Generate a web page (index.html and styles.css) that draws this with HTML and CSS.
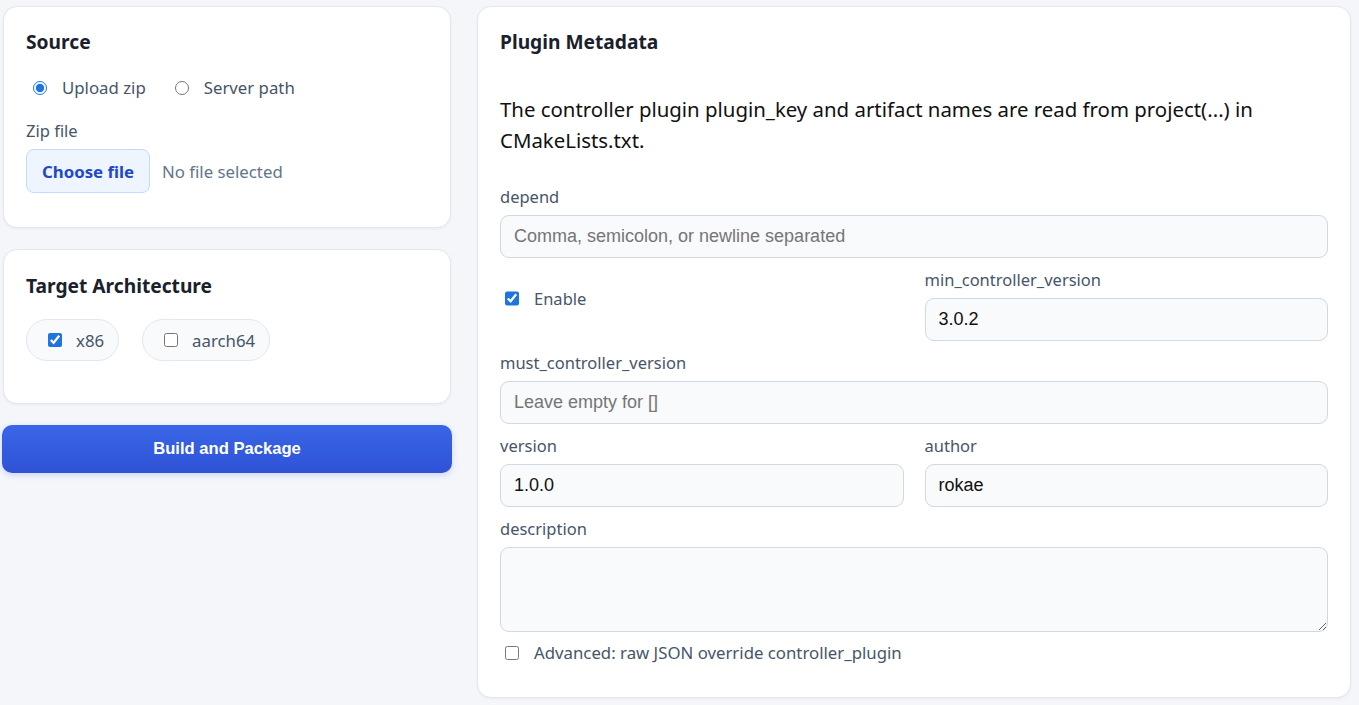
FILE: index.html
```html
<!DOCTYPE html>
<html lang="en">
<head>
    <meta charset="UTF-8">
    <meta name="viewport" content="width=device-width, initial-scale=1.0">
    <title>Plugin Builder</title>
    <link rel="stylesheet" href="styles.css">
</head>
<body>
    <div class="layout">
        <!-- Left column -->
        <div class="side">
            <div class="card source-card">
                <h3>Source</h3>
                <div class="radios">
                    <label class="opt"><input type="radio" name="src" checked> Upload zip</label>
                    <label class="opt"><input type="radio" name="src"> Server path</label>
                </div>
                <div class="field-label">Zip file</div>
                <div class="file-row">
                    <button class="file-btn" type="button">Choose file</button>
                    <span class="file-name">No file selected</span>
                </div>
            </div>

            <div class="card arch-card">
                <h3>Target Architecture</h3>
                <div class="pills">
                    <label class="pill"><input type="checkbox" checked> x86</label>
                    <label class="pill"><input type="checkbox"> aarch64</label>
                </div>
            </div>

            <button class="build-btn" type="button">Build and Package</button>
        </div>

        <!-- Right column -->
        <div class="card meta-card">
            <h3>Plugin Metadata</h3>
            <p class="note">The controller plugin plugin_key and artifact names are read from project(...) in CMakeLists.txt.</p>

            <div class="field">
                <label>depend</label>
                <input type="text" placeholder="Comma, semicolon, or newline separated">
            </div>

            <div class="row">
                <div class="field check-field">
                    <label class="opt"><input type="checkbox" checked> Enable</label>
                </div>
                <div class="field">
                    <label>min_controller_version</label>
                    <input type="text" value="3.0.2">
                </div>
            </div>

            <div class="field">
                <label>must_controller_version</label>
                <input type="text" placeholder="Leave empty for []">
            </div>

            <div class="row">
                <div class="field">
                    <label>version</label>
                    <input type="text" value="1.0.0">
                </div>
                <div class="field">
                    <label>author</label>
                    <input type="text" value="rokae">
                </div>
            </div>

            <div class="field">
                <label>description</label>
                <textarea></textarea>
            </div>

            <label class="opt advanced"><input type="checkbox"> Advanced: raw JSON override controller_plugin</label>
        </div>
    </div>
</body>
</html>
```

FILE: styles.css
```css
body {
    margin: 0;
    background: #f4f6fa;
    font-family: "Noto Sans", "Open Sans", sans-serif;
    color: #1e293b;
}

.layout {
    display: grid;
    grid-template-columns: 450px 1fr;
    gap: 25px;
    padding: 6px 8px 9px 2px;
    align-items: start;
}

.side {
    display: flex;
    flex-direction: column;
    gap: 21px;
}

.card {
    background: #fff;
    border: 1px solid #e3e8ef;
    border-radius: 14px;
    box-shadow: 0 1px 3px rgba(15, 23, 42, 0.05);
    padding: 22px 22px 20px;
    margin: 0 1px;
}

.card h3 {
    margin: 0;
    font-size: 19.2px;
    line-height: 26px;
    font-weight: 700;
    color: #1a202c;
}

.opt {
    display: flex;
    align-items: center;
    gap: 15px;
    font-size: 16.8px;
    color: #475569;
}

.opt input {
    margin: 0;
    width: 14px;
    height: 14px;
    accent-color: #1f74e0;
}

.radios {
    display: flex;
    gap: 29px;
    margin: 22px 0 0 7px;
    line-height: 22px;
}

.field-label {
    margin-top: 21px;
    font-size: 16.5px;
    color: #475569;
    line-height: 22px;
}

.file-row {
    display: flex;
    align-items: center;
    gap: 12px;
    margin-top: 7px;
}

.file-btn {
    font-family: "Noto Sans", sans-serif;
    font-size: 16.8px;
    font-weight: 700;
    color: #2048c8;
    background: #eef5ff;
    border: 1px solid #bfdbfe;
    border-radius: 8px;
    padding: 0 15px;
    height: 44px;
}

.file-name {
    font-size: 16.8px;
    color: #64748b;
}

.source-card {
    padding-bottom: 34px;
}

.arch-card {
    padding-top: 23px;
    padding-bottom: 42px;
}

.pills {
    display: flex;
    gap: 23px;
    margin-top: 20px;
}

.pill {
    display: flex;
    align-items: center;
    gap: 14px;
    height: 40px;
    padding: 0 14px 0 21px;
    border: 1px solid #e2e8f0;
    border-radius: 999px;
    background: #f8fafc;
    font-size: 16.8px;
    color: #475569;
}

.pill input {
    margin: 0;
    width: 14px;
    height: 14px;
    accent-color: #1f74e0;
}

.build-btn {
    height: 48px;
    border: none;
    border-radius: 10px;
    background: linear-gradient(180deg, #3966e6, #2f52d6);
    color: #fff;
    font-family: "Liberation Sans", Arial, sans-serif;
    font-size: 16.6px;
    font-weight: 700;
    box-shadow: 0 2px 6px rgba(47, 82, 214, 0.2);
}

.meta-card {
    margin: 0;
    padding: 22px 22px 33px;
}

.note {
    margin: 39px 0 0;
    font-size: 20.4px;
    line-height: 31px;
    color: #111;
}

.field {
    display: flex;
    flex-direction: column;
    margin-top: 11px;
}

.note + .field {
    margin-top: 30px;
}

.field label {
    font-size: 16.5px;
    line-height: 22px;
    color: #475569;
    margin-bottom: 7px;
}

.field input,
.field textarea {
    font-family: "Liberation Sans", Arial, sans-serif;
    font-size: 18px;
    color: #111;
    background: #f8fafc;
    border: 1px solid #cfd8e3;
    border-radius: 9px;
    padding: 0 13px;
    height: 43px;
    box-sizing: border-box;
}

.field input::placeholder {
    color: #757575;
}

.field textarea {
    height: 85px;
    padding: 10px 13px;
    resize: vertical;
}

.row {
    display: grid;
    grid-template-columns: 1fr 1fr;
    gap: 21px;
}

.check-field {
    justify-content: flex-start;
    padding-top: 8px;
}

.check-field .opt {
    margin: 0 0 0 5px;
    line-height: 22px;
    color: #475569;
}

.advanced {
    margin: 10px 0 0 5px;
    line-height: 22px;
}
```
